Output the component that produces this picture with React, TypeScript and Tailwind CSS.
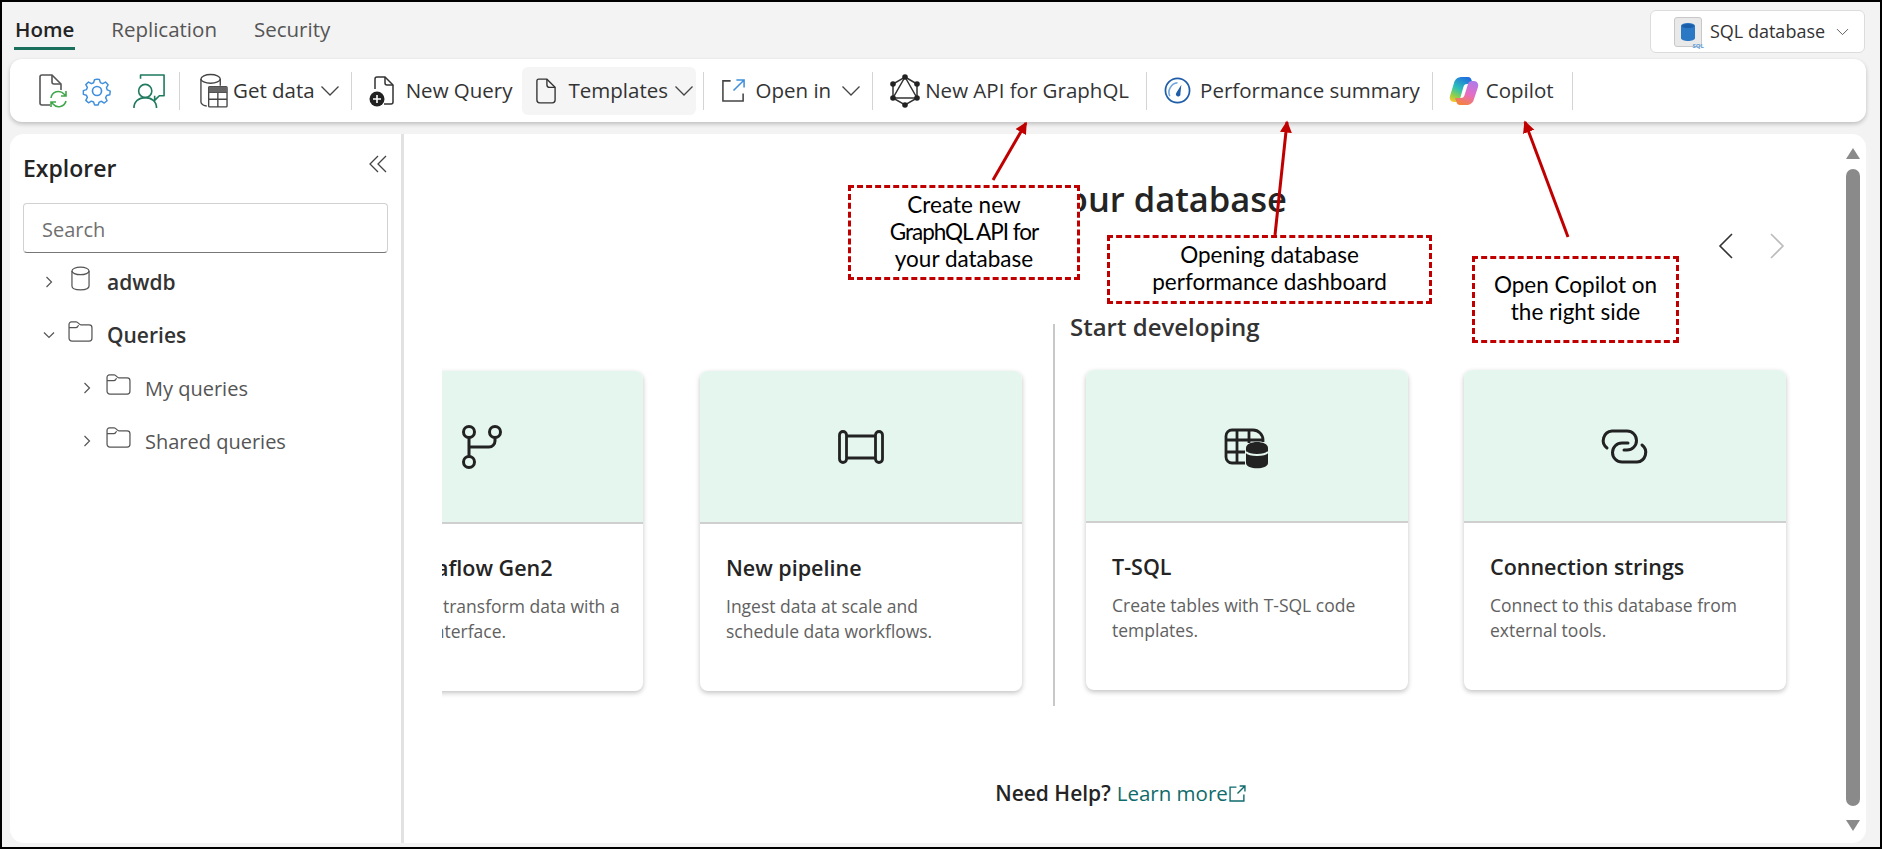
import type { ReactNode } from 'react'

const FONT = "font-['Open_Sans','Noto_Sans',sans-serif]"

function Chevron({ className = '' }: { className?: string }) {
  return (
    <svg viewBox="0 0 20 12" className={`w-[20px] h-[12px] ${className}`} fill="none" stroke="#444" strokeWidth="1.3">
      <path d="M1.5 1.5 10 10l8.5-8.5" />
    </svg>
  )
}

function Sep({ className = '' }: { className?: string }) {
  return <div className={`w-[1px] h-[38px] bg-[#d4d4d4] shrink-0 ${className}`} />
}

function RefreshFileIcon() {
  return (
    <svg viewBox="0 0 30 36" className="w-[30px] h-[36px]" fill="none" strokeWidth="1.6">
      <path d="M12 32H4a2 2 0 0 1-2-2V4a2 2 0 0 1 2-2h10l9 9v6" stroke="#555" />
      <path d="M14 2v7a2 2 0 0 0 2 2h7" stroke="#555" />
      <path d="M13 25a7.5 7.5 0 0 1 13-4l2 2m0-5v5h-5M28 28a7.5 7.5 0 0 1-13 3l-2-2m0 5v-5h5" stroke="#3fa64a" />
    </svg>
  )
}

function GearIcon() {
  return (
    <svg viewBox="0 0 24 24" className="w-[32px] h-[32px]" fill="none" stroke="#3f8fdc" strokeWidth="1.25" strokeLinejoin="round">
      <path d="M12 1.8l2 .3.8 2.7 1.9.8 2.5-1.3 2.2 2.4-1.4 2.4.7 1.9 2.500 1-.1 1.200-.3 2-2.600.6-.9 1.800 1.200 2.600-2.400 2-2.300-1.500-2 .7-.9 2.500h-3l-.9-2.600-1.900-.7-2.400 1.400-2.300-2.100 1.300-2.500-.8-1.800-2.600-.8v-3.200l2.600-.8.8-1.900-1.300-2.400 2.300-2.200 2.400 1.400 1.900-.8.8-2.600z" transform="translate(1.500 1.500) scale(.88)" />
      <circle cx="12" cy="12" r="3.400" />
    </svg>
  )
}

function PersonChatIcon() {
  return (
    <svg viewBox="0 0 34 38" className="w-[32px] h-[36px]" fill="none" strokeWidth="1.7">
      <path d="M8 6V2h25v22h-5l-5 5v-5" stroke="#1f7a5f" strokeLinejoin="round" />
      <circle cx="13" cy="19" r="7" stroke="#1f7a5f" />
      <path d="M1 37c0-7 5-11 12-11s12 4 12 11" stroke="#1f7a5f" />
    </svg>
  )
}

function DbTableIcon() {
  return (
    <svg viewBox="0 0 30 36" className="w-[29px] h-[35px]" fill="none" stroke="#444" strokeWidth="1.4">
      <ellipse cx="12" cy="6" rx="10" ry="4.500" />
      <path d="M2 6v24c0 2 3 4 6 4M22 6v7" />
      <rect x="10" y="14" width="19" height="21" rx="1" fill="#fff" />
      <path d="M10 20h19M10 27h19M19.500 20v15" />
      <rect x="10" y="14" width="19" height="6" fill="#666" stroke="none" />
    </svg>
  )
}

function NewQueryIcon() {
  return (
    <svg viewBox="0 0 26 32" className="w-[26px] h-[32px]" fill="none" stroke="#333" strokeWidth="1.500">
      <path d="M6 14V4a2 2 0 0 1 2-2h8l8 8v17a2 2 0 0 1-2 2h-7" />
      <path d="M16 2v6a2 2 0 0 0 2 2h6" />
      <circle cx="8" cy="24" r="7.500" fill="#222" stroke="none" />
      <path d="M8 20v8M4 24h8" stroke="#fff" strokeWidth="1.600" />
    </svg>
  )
}

function FileIcon() {
  return (
    <svg viewBox="0 0 22 28" className="w-[20px] h-[26px]" fill="none" stroke="#333" strokeWidth="1.500">
      <path d="M3 1h9l9 9v14a3 3 0 0 1-3 3H4a3 3 0 0 1-3-3V3a2 2 0 0 1 2-2z" />
      <path d="M12 1v6a3 3 0 0 0 3 3h6" />
    </svg>
  )
}

function OpenInIcon() {
  return (
    <svg viewBox="0 0 26 26" className="w-[25px] h-[25px]" fill="none" strokeWidth="1.600">
      <path d="M10 3H2v21h21v-8" stroke="#444" />
      <path d="M13 13 24 2m-8 0h8v8" stroke="#3f8fdc" />
    </svg>
  )
}

function GraphqlIcon() {
  const pts = [[15, 3], [27, 10], [27, 24], [15, 31], [3, 24], [3, 10]]
  return (
    <svg viewBox="0 0 30 34" className="w-[30px] h-[34px]" fill="none" stroke="#333" strokeWidth="1.500">
      <path d="M15 3 27 10v14L15 31 3 24V10z" />
      <path d="M15 3 27 24H3z" />
      {pts.map(([x, y]) => (
        <circle key={`${x}-${y}`} cx={x} cy={y} r="2.800" fill="#222" stroke="none" />
      ))}
    </svg>
  )
}

function GaugeIcon() {
  return (
    <svg viewBox="0 0 28 28" className="w-[27px] h-[27px]" fill="none" stroke="#1f5da8">
      <circle cx="14" cy="14" r="12.500" strokeWidth="1.800" />
      <path d="M6 20a10 10 0 0 1 8-14" strokeWidth="1.600" stroke="#6fa3dc" />
      <path d="M13 16l5-8-1 9a2.400 2.400 0 1 1-4-1z" fill="#1f5da8" stroke="none" />
    </svg>
  )
}

function CopilotIcon() {
  return (
    <svg viewBox="0 0 30 30" className="w-[30px] h-[30px]">
      <defs>
        <linearGradient id="cpA" x1="0.7" y1="0" x2="0.2" y2="1">
          <stop offset="0" stopColor="#1f6fe0" />
          <stop offset="0.5" stopColor="#2cc0b8" />
          <stop offset="0.8" stopColor="#8fd14a" />
          <stop offset="1" stopColor="#f7c52e" />
        </linearGradient>
        <linearGradient id="cpB" x1="0.7" y1="0" x2="0.3" y2="1">
          <stop offset="0" stopColor="#b07be8" />
          <stop offset="0.5" stopColor="#e66cc4" />
          <stop offset="1" stopColor="#f5823a" />
        </linearGradient>
      </defs>
      <path d="M13 1h6c2 0 3 1 3.500 3L24 8h-6c-2 0-3 1-3.600 3L11 23c-.5 2-2 3-4 3H5c-3 0-5-3-4-6l4-13c1-4 4-6 8-6z" fill="url(#cpA)" />
      <path d="M17 29h-6c-2 0-3-1-3.500-3L6 22h6c2 0 3-1 3.600-3L19 8c.5-2 2-3 4-3h2c3 0 5 3 4 6l-4 12c-1 4-4 6-8 6z" fill="url(#cpB)" />
    </svg>
  )
}

function SqlTileIcon() {
  return (
    <div className="relative w-[28px] h-[30px] rounded-[3px] bg-[#e9e9e9] border border-[#c8c8c8] flex items-center justify-center shrink-0">
      <svg viewBox="0 0 14 18" className="w-[14px] h-[18px]">
        <path d="M0 3c0-4 14-4 14 0v12c0 4-14 4-14 0z" fill="#2b78c5" />
        <ellipse cx="7" cy="3" rx="6" ry="2" fill="#1a5ea8" />
      </svg>
      <span className="absolute -right-[3px] -bottom-[3px] text-[6px] leading-none font-bold text-[#5b9bd8]">SQL</span>
    </div>
  )
}

function FolderIcon() {
  return (
    <svg viewBox="0 0 26 22" className="w-[25px] h-[21px]" fill="none" stroke="#555" strokeWidth="1.300">
      <path d="M1 5V3.500A2.500 2.500 0 0 1 3.500 1h5c1 0 1.500.5 2.500 1.500S12.500 4 13.500 4H22a3 3 0 0 1 3 3v11a3 3 0 0 1-3 3H4a3 3 0 0 1-3-3z" />
      <path d="M1 7h7c1 0 2-.5 3-2.500" />
    </svg>
  )
}

function BranchIcon() {
  return (
    <svg viewBox="0 0 40 44" className="w-[40px] h-[44px]" fill="none" stroke="#222" strokeWidth="3">
      <circle cx="7" cy="7" r="5.500" />
      <circle cx="33" cy="7" r="5.500" />
      <circle cx="7" cy="37" r="5.500" />
      <path d="M7 12.500v19M7 22h20a6 6 0 0 0 6-6v-3.500" />
    </svg>
  )
}

function PipelineIcon() {
  return (
    <svg viewBox="0 0 46 34" className="w-[46px] h-[34px]" fill="none" stroke="#222" strokeWidth="2.800">
      <rect x="1.500" y="1.500" width="7" height="31" rx="3.500" />
      <rect x="37.500" y="1.500" width="7" height="31" rx="3.500" />
      <path d="M8.500 6h29M8.500 28h29" />
    </svg>
  )
}

function TableDbIcon() {
  return (
    <svg viewBox="0 0 70 60" className="w-[70px] h-[60px]" fill="none" stroke="#222" strokeWidth="2.800">
      <path d="M33 47H20a6 6 0 0 1-6-6V20a6 6 0 0 1 6-6h21a10 10 0 0 1 10 10v2" />
      <path d="M14 24h37M14 36h19M25 14v33M37 14v13" />
      <path d="M34 32c0-8 22-8 22 0v15c0 7-22 7-22 0z" fill="#222" stroke="none" />
      <path d="M34 36c4 4 18 4 22 0" stroke="#e5f6ef" strokeWidth="1.800" />
    </svg>
  )
}

function LinkIcon() {
  return (
    <svg viewBox="0 0 70 60" className="w-[70px] h-[60px]" fill="none" stroke="#222" strokeWidth="3" strokeLinecap="round">
      <path d="M17 32A9.500 9.500 0 0 1 22 15h15a9.500 9.500 0 0 1 0 19h-3" />
      <path d="M38 27h-6a9.500 9.500 0 0 0 0 19h15a9.500 9.500 0 0 0 5-17" />
    </svg>
  )
}

function ToolButton({ icon, label, chevron, gap, className = '' }: { icon: ReactNode; label: string; chevron?: boolean; gap: string; className?: string }) {
  return (
    <div className={`flex items-center shrink-0 ${gap} ${className}`}>
      {icon}
      <span className="text-[20.500px] text-[#333] whitespace-nowrap">{label}</span>
      {chevron && <Chevron />}
    </div>
  )
}

function Toolbar() {
  return (
    <div className="ml-[8px] mr-[14px] h-[63px] bg-white rounded-[12px] shadow-[0_2px_4px_rgba(0,0,0,0.22)] flex items-center pl-[28px] shrink-0">
      <RefreshFileIcon />
      <div className="ml-[13px]"><GearIcon /></div>
      <div className="ml-[20px]"><PersonChatIcon /></div>
      <Sep className="ml-[14px]" />
      <ToolButton className="ml-[19px]" gap="gap-[5px]" icon={<DbTableIcon />} label="Get data" chevron />
      <Sep className="ml-[11px]" />
      <ToolButton className="ml-[17px]" gap="gap-[11px]" icon={<NewQueryIcon />} label="New Query" />
      <div className="ml-[9px] h-[48px] w-[174px] rounded-[6px] bg-[#f5f5f5] flex items-center pl-[14px] gap-[13px] shrink-0">
        <FileIcon />
        <span className="text-[20.500px] text-[#333]">Templates</span>
        <Chevron className="-ml-[7px]" />
      </div>
      <Sep className="ml-[7px]" />
      <ToolButton className="ml-[17px]" gap="gap-[10px]" icon={<OpenInIcon />} label="Open in" chevron />
      <Sep className="ml-[11px]" />
      <ToolButton className="ml-[17px]" gap="gap-[5px]" icon={<GraphqlIcon />} label="New API for GraphQL" />
      <Sep className="ml-[17px]" />
      <ToolButton className="ml-[17px]" gap="gap-[9px]" icon={<GaugeIcon />} label="Performance summary" />
      <Sep className="ml-[12px]" />
      <ToolButton className="ml-[16px]" gap="gap-[7px]" icon={<CopilotIcon />} label="Copilot" />
      <Sep className="ml-[18px]" />
    </div>
  )
}

function TreeRow({ indent, open, icon, label, bold }: { indent: string; open?: boolean; icon: ReactNode; label: string; bold?: boolean }) {
  return (
    <div className={`h-[53px] flex items-center ${indent}`}>
      <svg viewBox="0 0 12 12" className="w-[12px] h-[12px] shrink-0 -mt-[2px]" fill="none" stroke="#555" strokeWidth="1.200">
        <path d={open ? 'M1 3.500 6 8.500l5-5' : 'M3.500 1l5 5-5 5'} />
      </svg>
      <div className="w-[25px] ml-[13px] -mt-[8px] flex justify-center shrink-0">{icon}</div>
      <span className={`ml-[14px] ${bold ? 'text-[21px] font-semibold text-[#333]' : 'text-[20px] text-[#555]'}`}>{label}</span>
    </div>
  )
}

function Explorer() {
  return (
    <aside className="w-[394px] ml-[8px] bg-white rounded-tl-[14px] rounded-bl-[14px] border-r-[3px] border-[#e2e2e2] pl-[13px] pr-[12px] pt-[16px] shrink-0">
      <div className="h-[37px] flex items-center justify-between pr-[2px]">
        <h2 className="text-[23px] font-semibold text-[#242424]">Explorer</h2>
        <svg viewBox="0 0 18 18" className="w-[18px] h-[18px] -mt-[10px]" fill="none" stroke="#444" strokeWidth="1.300">
          <path d="M9 1 1 9l8 8M17 1 9 9l8 8" />
        </svg>
      </div>
      <div className="mt-[16px] h-[50px] rounded-[4px] border border-[#d1d1d1] border-b-[#777] flex items-center pl-[18px] pt-[3px] text-[20px] text-[#707070] w-[365px]">
        Search
      </div>
      <div className="mt-[3px]">
        <TreeRow indent="pl-[20px]" bold label="adwdb" icon={
          <svg viewBox="0 0 20 26" className="w-[19px] h-[25px]" fill="none" stroke="#555" strokeWidth="1.300">
            <ellipse cx="10" cy="5" rx="9" ry="4" />
            <path d="M1 5v16c0 2 3 4 9 4s9-2 9-4V5" />
          </svg>
        } />
        <TreeRow indent="pl-[20px]" open bold label="Queries" icon={<FolderIcon />} />
        <TreeRow indent="pl-[58px]" label="My queries" icon={<FolderIcon />} />
        <TreeRow indent="pl-[58px]" label="Shared queries" icon={<FolderIcon />} />
      </div>
    </aside>
  )
}

function Card({ icon, title, lines, className = '' }: { icon: ReactNode; title: string; lines: string[]; className?: string }) {
  return (
    <div className={`w-[322px] h-[320px] bg-white rounded-[8px] shadow-[0_2px_5px_rgba(0,0,0,0.24)] overflow-hidden shrink-0 ${className}`}>
      <div className="h-[153px] bg-[#e5f6ef] border-b-2 border-[#cfcfcf] flex items-center justify-center">{icon}</div>
      <div className="pl-[26px] pt-[29px]">
        <h3 className="text-[21.500px] font-semibold text-[#242424] leading-[30px] whitespace-nowrap">{title}</h3>
        <p className="mt-[11px] text-[17.500px] leading-[25px] text-[#616161] whitespace-nowrap">
          {lines[0]}
          <br />
          {lines[1]}
        </p>
      </div>
    </div>
  )
}

function MainPanel() {
  return (
    <main className="flex-1 bg-white rounded-tr-[14px] rounded-br-[14px] flex min-w-0">
      <div className="flex-1 min-w-0 pr-[8px]">
        <h1 className="mt-[40px] w-[883px] h-[50px] text-right text-[34.500px] leading-[50px] font-semibold text-[#242424] whitespace-nowrap">Build your database</h1>
        <div className="h-[44px] flex items-center justify-end gap-[35px] pr-[52px]">
          <svg viewBox="0 0 16 28" className="w-[16px] h-[28px]" fill="none" stroke="#333" strokeWidth="1.600"><path d="M14 2 2 14l12 12" /></svg>
          <svg viewBox="0 0 16 28" className="w-[16px] h-[28px]" fill="none" stroke="#bbb" strokeWidth="1.600"><path d="M2 2l12 12L2 26" /></svg>
        </div>
        <div className="mt-[56px] flex pl-[38px]">
          <div className="w-[611px] h-[390px] overflow-hidden pt-[47px] shrink-0">
            <div className="flex gap-[57px] -ml-[121px]">
              <Card icon={<BranchIcon />} title="New Dataflow Gen2" lines={['Import and transform data with a', 'code-free interface.']} />
              <Card icon={<PipelineIcon />} title="New pipeline" lines={['Ingest data at scale and', 'schedule data workflows.']} />
            </div>
          </div>
          <div className="relative h-[382px] border-l-2 border-[#c8c8c8] pl-[31px] shrink-0">
            <h2 className="absolute left-[15px] top-[-15px] text-[24px] font-semibold text-[#333] whitespace-nowrap">Start developing</h2>
            <div className="flex gap-[56px] pt-[46px]">
              <Card icon={<TableDbIcon />} title="T-SQL" lines={['Create tables with T-SQL code', 'templates.']} />
              <Card icon={<LinkIcon />} title="Connection strings" lines={['Connect to this database from', 'external tools.']} />
            </div>
          </div>
        </div>
        <div className="mt-[64px] flex items-center justify-center">
          <span className="text-[21px] font-semibold text-[#242424]">Need Help?</span>
          <span className="ml-[6px] text-[20.500px] text-[#0f6b6b]">Learn more</span>
          <svg viewBox="0 0 16 16" className="w-[17px] h-[17px] ml-[1px]" fill="none" stroke="#0f6b6b" strokeWidth="1.300">
            <path d="M7 2H1v13h13V9M8 8l7-7m-5 0h5v5" />
          </svg>
        </div>
      </div>
      <div className="w-[16px] mr-[5px] flex flex-col items-center pt-[14px] pb-[12px] shrink-0">
        <div className="w-0 h-0 border-x-[7px] border-x-transparent border-b-[11px] border-b-[#8a8a8a]" />
        <div className="flex-1 w-[14px] rounded-full bg-[#8a8a8a] mt-[10px] mb-[14px]" />
        <div className="w-0 h-0 border-x-[7px] border-x-transparent border-t-[11px] border-t-[#8a8a8a]" />
      </div>
    </main>
  )
}

function Callout({ className, lines }: { className: string; lines: string[] }) {
  return (
    <div className={`absolute bg-white border-[3px] border-dashed border-[#c00000] flex flex-col items-center justify-center font-['Lato',sans-serif] text-[22.500px] leading-[27px] text-black z-10 ${className}`}>
      {lines.map(l => (
        <span key={l} className={`whitespace-nowrap ${l.startsWith('GraphQL') ? 'tracking-[-1px]' : ''}`}>{l}</span>
      ))}
    </div>
  )
}

function Arrows() {
  const arrows = [
    [991, 178, 1024, 121],
    [1273, 233, 1285, 120],
    [1566, 235, 1523, 120],
  ]
  return (
    <svg className="absolute left-0 top-0 z-20 pointer-events-none" width="1882" height="849" fill="none">
      <defs>
        <marker id="head" markerWidth="5" markerHeight="5" refX="3.500" refY="2" orient="auto">
          <path d="M0 0 4 2 0 4z" fill="#c00000" />
        </marker>
      </defs>
      {arrows.map(([a, b, c, d]) => (
        <line key={a} x1={a} y1={b} x2={c} y2={d} stroke="#c00000" strokeWidth="3" markerEnd="url(#head)" />
      ))}
    </svg>
  )
}

export default function App() {
  return (
    <div className={`relative w-[1882px] h-[849px] overflow-hidden bg-[#f3f3f3] border-2 border-black flex flex-col ${FONT}`}>
      <header className="h-[57px] flex items-start justify-between pl-[13px] pr-[15px] shrink-0">
        <nav className="flex gap-[37px] pt-[12px] text-[20.500px]">
          <div className="h-[36px] border-b-[3px] border-[#1a6f5c] font-semibold text-[#242424] px-[1px] -mx-[1px]">Home</div>
          <div className="text-[#555]">Replication</div>
          <div className="text-[#555]">Security</div>
        </nav>
        <div className="mt-[8px] w-[215px] h-[43px] bg-white rounded-[6px] border border-[#dcdcdc] flex items-center pl-[23px] gap-[8px]">
          <SqlTileIcon />
          <span className="text-[18px] text-[#333] whitespace-nowrap">SQL database</span>
          <Chevron className="!w-[13px] !h-[8px] ml-[3px]" />
        </div>
      </header>
      <Toolbar />
      <div className="flex flex-1 min-h-0 mt-[12px] mb-[4px] mr-[14px]">
        <Explorer />
        <MainPanel />
      </div>
      <Callout className="left-[846px] top-[183px] w-[232px] h-[95px] pb-[3px]" lines={['Create new', 'GraphQL API for', 'your database']} />
      <Callout className="left-[1105px] top-[233px] w-[325px] h-[69px] pb-[3px]" lines={['Opening database', 'performance dashboard']} />
      <Callout className="left-[1470px] top-[254px] w-[207px] h-[87px] pb-[4px]" lines={['Open Copilot on', 'the right side']} />
      <Arrows />
    </div>
  )
}
